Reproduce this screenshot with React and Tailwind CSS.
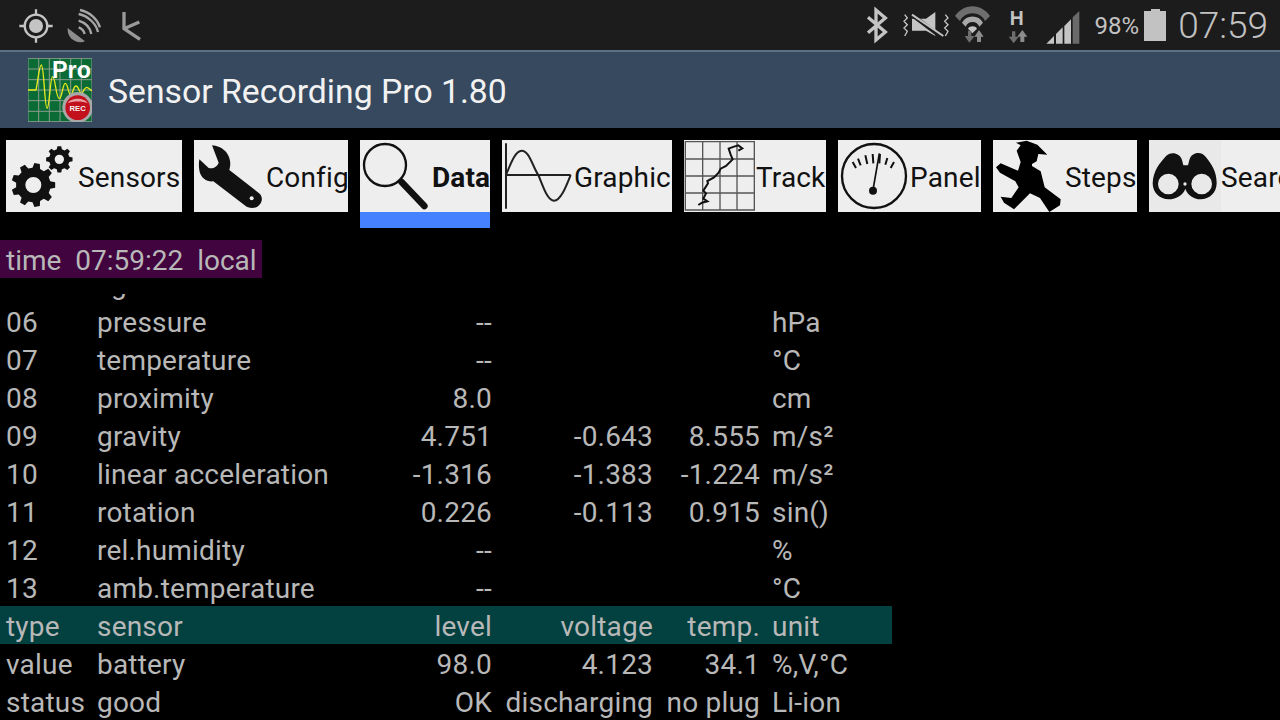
const font = { fontFamily: 'Roboto, sans-serif' };

const rows = [
  ['05', 'light', '--', '', '', 'lx'],
  ['06', 'pressure', '--', '', '', 'hPa'],
  ['07', 'temperature', '--', '', '', '°C'],
  ['08', 'proximity', '8.0', '', '', 'cm'],
  ['09', 'gravity', '4.751', '-0.643', '8.555', 'm/s²'],
  ['10', 'linear acceleration', '-1.316', '-1.383', '-1.224', 'm/s²'],
  ['11', 'rotation', '0.226', '-0.113', '0.915', 'sin()'],
  ['12', 'rel.humidity', '--', '', '', '%'],
  ['13', 'amb.temperature', '--', '', '', '°C'],
  ['type', 'sensor', 'level', 'voltage', 'temp.', 'unit'],
  ['value', 'battery', '98.0', '4.123', '34.1', '%,V,°C'],
  ['status', 'good', 'OK', 'discharging', 'no plug', 'Li-ion'],
];

// toothed outline plus centre hole, used with fill-rule evenodd
const gearPath = (cx, cy, outer, inner, hole, teeth) => {
  let d = '';
  for (let i = 0; i < teeth; i++) {
    const step = (Math.PI * 2) / teeth;
    const a = i * step;
    const pts = [
      [inner, a - step * 0.32],
      [outer, a - step * 0.18],
      [outer, a + step * 0.18],
      [inner, a + step * 0.32],
    ];
    pts.forEach(([r, t], j) => {
      const x = (cx + r * Math.cos(t)).toFixed(1);
      const y = (cy + r * Math.sin(t)).toFixed(1);
      d += `${i === 0 && j === 0 ? 'M' : 'L'}${x} ${y} `;
    });
  }
  d += `Z M${cx - hole} ${cy} a${hole} ${hole} 0 1 0 ${hole * 2} 0 a${hole} ${hole} 0 1 0 ${-hole * 2} 0 Z`;
  return d;
};

function TabIcon({ x, children }) {
  return (
    <svg width="72" height="72" viewBox={`${x} 30 216 216`} className="shrink-0">
      {children}
    </svg>
  );
}

const icons = {
  Sensors: (
    <TabIcon x={18}>
      <path fillRule="evenodd" fill="#111" d={gearPath(100, 165, 66, 52, 24, 9)} />
      <path fillRule="evenodd" fill="#111" d={gearPath(178, 88, 40, 31, 14, 8)} />
    </TabIcon>
  ),
  Config: (
    <TabIcon x={582}>
      <path
        fill="#111"
        d="M636 46 C664 48 686 66 690 92 C692 104 690 112 688 120 L780 192 C790 204 786 222 772 230 C758 238 744 234 734 226 L640 154 C620 156 604 144 599 126 C596 112 596 100 598 88 L626 114 C638 118 652 110 656 98 Z"
      />
      <circle cx="755" cy="205" r="6" fill="#eeeeee" />
    </TabIcon>
  ),
  Data: (
    <TabIcon x={1080}>
      <circle cx="1155" cy="105" r="63" fill="none" stroke="#111" strokeWidth="7" />
      <path d="M1204 155 L1273 228" stroke="#111" strokeWidth="20" strokeLinecap="round" />
    </TabIcon>
  ),
  Graphic: (
    <TabIcon x={36}>
      <path d="M48 40 V236 M48 135 H242" stroke="#222" strokeWidth="6" fill="none" />
      <path d="M48 135 C66 90 78 62 95 62 C118 62 128 110 145 135 C160 170 172 212 192 212 C212 212 228 170 242 135" stroke="#222" strokeWidth="6" fill="none" />
    </TabIcon>
  ),
  Track: (
    <TabIcon x={582}>
      <path d="M586 35 H793 V240 H586 Z M638 35 V240 M690 35 V240 M741 35 V240 M586 87 H793 M586 138 H793 M586 189 H793" stroke="#555" strokeWidth="4" fill="none" />
      <path d="M625 225 L636 218 L652 214 L640 206 L648 190 L640 182 L654 160 L652 153 L672 142 L686 128 L692 116 L708 108 L728 88 L722 74 L716 56 L732 50 L745 46 L757 55 L745 62" stroke="#111" strokeWidth="6" fill="none" />
    </TabIcon>
  ),
  Panel: (
    <TabIcon x={24}>
      <circle cx="132" cy="138" r="96" fill="none" stroke="#111" strokeWidth="7" />
      <path d="M68 96 L78 114 M84 86 L92 106 M106 76 L112 102 M128 72 L130 100 M150 72 L148 100 M172 84 L166 104 M192 96 L182 114" stroke="#111" strokeWidth="6" />
      <path d="M129 180 L148 70" stroke="#111" strokeWidth="5" />
      <circle cx="129" cy="182" r="12" fill="#111" />
    </TabIcon>
  ),
  Steps: (
    <TabIcon x={489}>
      <path
        fill="#000"
        d="M558 38 L590 32 L622 44 L652 74 L625 72 L620 94 L606 102 L606 108 L632 124 L644 172 L692 208 L690 226 L658 246 L630 204 L600 190 L552 238 L522 218 L512 200 L544 204 L566 172 L556 154 L510 128 L498 112 L512 100 L564 122 L572 96 L560 62 L572 46 Z"
      />
    </TabIcon>
  ),
  Search: (
    <TabIcon x={957}>
      <rect x="957" y="30" width="216" height="216" fill="#e9e9e9" />
      <path
        fillRule="evenodd"
        fill="#111"
        d="M968 160 C970 120 990 100 1005 82 C1018 64 1048 66 1056 90 L1060 106 L1074 106 L1078 90 C1086 64 1116 64 1128 82 C1144 102 1160 124 1160 160 C1160 188 1138 208 1112 208 C1090 208 1072 194 1066 176 C1060 194 1040 208 1016 208 C990 208 968 188 968 160 Z M984 162 a31 31 0 1 0 62 0 a31 31 0 1 0 -62 0 Z M1084 162 a31 31 0 1 0 62 0 a31 31 0 1 0 -62 0 Z"
      />
      <circle cx="1065" cy="162" r="5" fill="#e9e9e9" />
    </TabIcon>
  ),
};

const tabs = [
  { label: 'Sensors', w: 'w-[176px]', ml: 'ml-[6px]' },
  { label: 'Config', w: 'w-[154px]', ml: 'ml-[12px]' },
  { label: 'Data', w: 'w-[130px]', ml: 'ml-[12px]', active: true },
  { label: 'Graphic', w: 'w-[170px]', ml: 'ml-[12px]' },
  { label: 'Track', w: 'w-[142px]', ml: 'ml-[12px]' },
  { label: 'Panel', w: 'w-[143px]', ml: 'ml-[12px]' },
  { label: 'Steps', w: 'w-[144px]', ml: 'ml-[12px]' },
  { label: 'Search', w: 'w-[144px]', ml: 'ml-[12px]' },
];

function Tab({ label, w, ml, active }) {
  return (
    <div className={`${w} ${ml} shrink-0`}>
      <div className="h-[72px] bg-[#eeeeee] flex items-center overflow-hidden text-[28px] tracking-[0.15px] text-[#111]">
        {icons[label]}
        <span className={`mt-[4px] ${active ? 'font-bold' : ''}`}>{label}</span>
      </div>
      {active && <div className="h-[16px] bg-[#4682ff]" />}
    </div>
  );
}

function Row({ cells }) {
  const bg = cells[0] === 'type' ? 'bg-[#034040]' : '';
  const cell = `h-[38px] leading-[42px] ${bg}`;
  return (
    <>
      <div className={`${cell} pl-[6px]`}>{cells[0]}</div>
      <div className={cell}>{cells[1]}</div>
      <div className={`${cell} text-right`}>{cells[2]}</div>
      <div className={`${cell} text-right`}>{cells[3]}</div>
      <div className={`${cell} text-right`}>{cells[4]}</div>
      <div className={`${cell} pl-[12px]`}>{cells[5]}</div>
    </>
  );
}

function Logo() {
  return (
    <svg width="64" height="64" viewBox="84 175 192 190" className="shrink-0">
      <rect x="84" y="175" width="192" height="190" fill="#0b6b35" />
      <path d="M84 175 H276 V365 H84 Z M116 175 V365 M148 175 V365 M180 175 V365 M212 175 V365 M244 175 V365 M84 207 H276 M84 239 H276 M84 270 H276 M84 302 H276 M84 334 H276" stroke="#8a9c8e" strokeWidth="3" fill="none" />
      <path d="M84 270 L108 270 C114 240 118 195 124 195 C132 195 134 325 141 325 C149 325 150 230 158 230 C166 230 168 296 178 296 C186 296 188 250 196 250 C204 250 205 285 212 285 C218 285 220 258 228 258 C236 258 238 280 244 280 C250 280 252 262 260 262 C266 262 270 270 276 272" stroke="#e6ea1e" strokeWidth="4" fill="none" />
      <text x="156" y="234" fontFamily="Liberation Sans, sans-serif" fontWeight="700" fontSize="70" fill="#fff">Pro</text>
      <circle cx="233" cy="322" r="46" fill="#a8a8a8" />
      <circle cx="233" cy="323" r="37" fill="#c2101c" />
      <path d="M203 310 C212 292 254 292 263 310 C250 303 216 303 203 310 Z" fill="#e8a0a4" />
      <text x="233" y="332" textAnchor="middle" fontFamily="Liberation Sans, sans-serif" fontWeight="700" fontSize="23" fill="#f4f4f4">REC</text>
    </svg>
  );
}

function LeftStatusIcons() {
  return (
    <svg width="160" height="50" viewBox="0 0 480 150">
      <circle cx="108" cy="78" r="34" fill="none" stroke="#c4c4c4" strokeWidth="7" />
      <circle cx="108" cy="78" r="21" fill="#c4c4c4" />
      <path d="M108 28 V46 M108 110 V128 M58 78 H76 M140 78 H158" stroke="#c4c4c4" strokeWidth="7" />
      <path d="M203 84 L255 124 C232 134 200 116 203 84 Z" fill="#8c8c8c" />
      <path d="M236 82 C246 86 252 92 254 102 M236 62 C256 68 270 82 274 102 M236 42 C266 48 288 72 294 96 M240 30 C270 36 292 58 300 82" stroke="#a6a6a6" strokeWidth="7" fill="none" />
      <path d="M372 36 V86 L420 118 M372 86 L418 66" stroke="#9a9a9a" strokeWidth="10" fill="none" />
    </svg>
  );
}

function RightStatusIcons() {
  return (
    <svg width="225" height="50" viewBox="30 0 675 150">
      {/* bluetooth */}
      <path d="M54 52 L106 96 L78 120 V30 L106 54 L54 98" stroke="#c4c4c4" strokeWidth="10" fill="none" />
      {/* vibrate, muted */}
      <path d="M164 44 L172 54 L162 64 L172 74 L162 84 L172 94 L164 108 M286 44 L294 54 L284 64 L294 74 L284 84 L294 94 L286 108" stroke="#c4c4c4" strokeWidth="4" fill="none" />
      <path d="M186 56 L228 56 L256 36 L256 108 L228 92 L186 92 Z" fill="#c4c4c4" />
      <path d="M180 40 L280 116" stroke="#1c1c1c" strokeWidth="12" />
      <path d="M186 44 L280 108" stroke="#c4c4c4" strokeWidth="6" />
      {/* wifi */}
      <path d="M315 48 A62 62 0 0 1 420 48 L405 63 A42 42 0 0 0 330 63 Z" fill="#6e6e6e" />
      <path d="M336 68 A36 36 0 0 1 399 68 L388 80 A22 22 0 0 0 347 80 Z" fill="#a8a8a8" />
      <path d="M354 86 A16 16 0 0 1 381 86 L367 100 Z" fill="#c4c4c4" />
      <path d="M358 128 L344 108 H354 V92 H364 V108 H374 Z" fill="#6e6e6e" />
      <path d="M387 90 L401 110 H393 V126 H381 V110 H373 Z" fill="#8c8c8c" />
      {/* mobile data */}
      <text x="500" y="74" textAnchor="middle" fontFamily="Liberation Sans, sans-serif" fontWeight="700" fontSize="58" fill="#c4c4c4">H</text>
      <path d="M491 130 L476 110 H486 V94 H496 V110 H506 Z" fill="#6e6e6e" />
      <path d="M517 90 L532 110 H523 V126 H511 V110 H502 Z" fill="#8c8c8c" />
      {/* signal */}
      <path d="M589 131 L612 108 V131 Z M618 102 L638 82 V131 H618 Z" fill="#c4c4c4" />
      <path d="M643 78 L663 58 V131 H643 Z" fill="#c4c4c4" />
      <path d="M668 52 L688 33 V131 H668 Z" fill="#6a6a6a" />
    </svg>
  );
}

export default function App() {
  return (
    <div className="w-[1280px] h-[720px] bg-black overflow-hidden text-[#b8b8b8]" style={font}>
      <div className="h-[50px] bg-[#1c1c1c] flex items-center justify-between pr-[12px] text-[#c2c2c2]">
        <LeftStatusIcons />
        <div className="flex items-center">
          <RightStatusIcons />
          <span className="ml-[10px] mr-[5px] mt-[2px] text-[24px]">98%</span>
          {/* battery */}
          <div className="flex flex-col items-center mr-[12px]">
            <div className="w-[9px] h-[2px] bg-[#c2c2c2]" />
            <div className="w-[22px] h-[30px] bg-[#c2c2c2]" />
          </div>
          <span className="mt-[2px] text-[37px] font-light">07:59</span>
        </div>
      </div>
      <div className="h-[78px] bg-[#36495f] border-t-2 border-[#5c7083] flex items-center pl-[28px]">
        <Logo />
        <span className="ml-[16px] mt-[4px] text-[33.75px] text-[#f2f2f2]">Sensor Recording Pro 1.80</span>
      </div>
      <div className="flex items-start pt-[12px] h-[112px]">
        {tabs.map((t) => <Tab key={t.label} {...t} />)}
      </div>
      <div className="h-[38px] w-[262px] bg-[#42043f] pl-[6px] text-[28px] leading-[42px] whitespace-pre">time  07:59:22  local</div>
      <div className="mt-[16px] h-[426px] overflow-hidden">
        <div className="-mt-[30px] grid grid-cols-[97px_300px_95px_161px_107px_132px] w-[892px] text-[28px] tracking-[0.2px] whitespace-nowrap">
          {rows.map((r) => <Row key={r[0]} cells={r} />)}
        </div>
      </div>
    </div>
  );
}
